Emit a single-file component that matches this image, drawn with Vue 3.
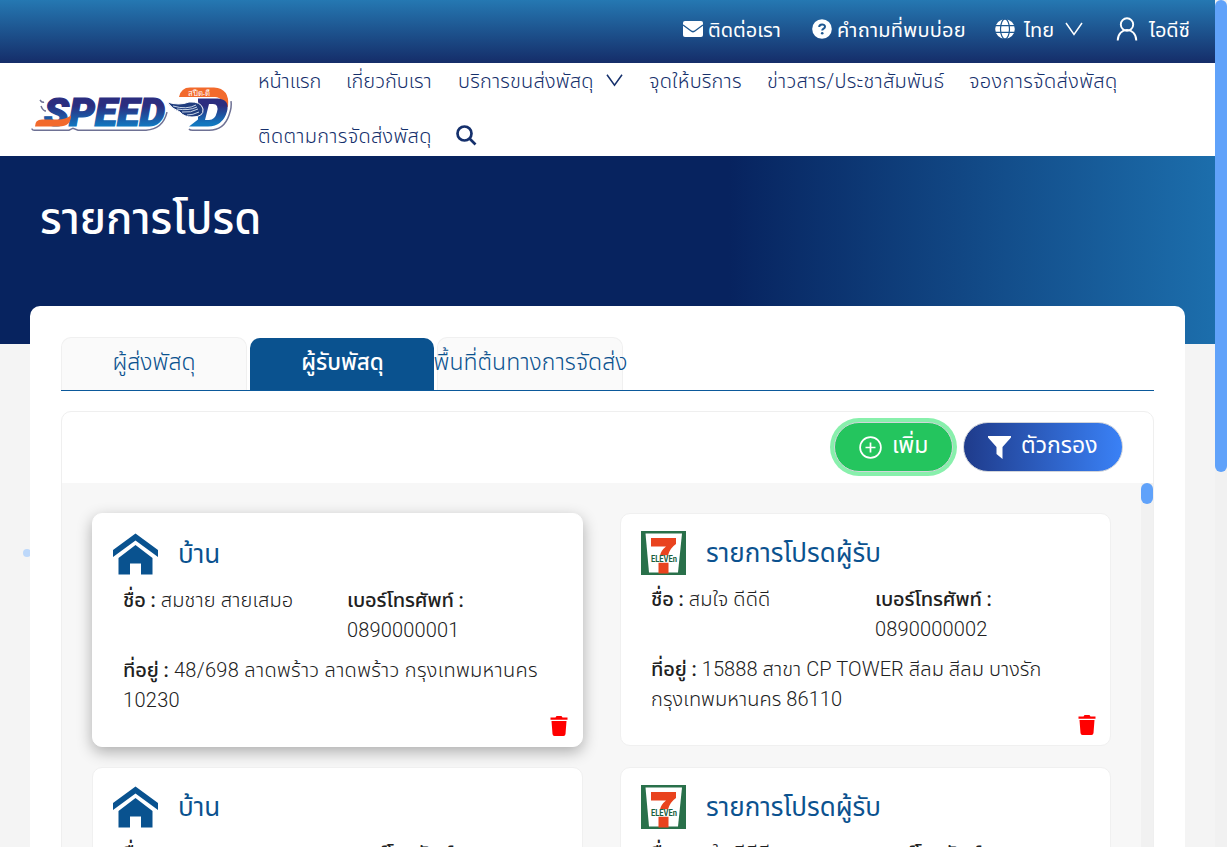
<script setup>
const nav = [
  { t: 'หน้าแรก', w: 62, sp: -0.1 },
  { t: 'เกี่ยวกับเรา', w: 86, sp: 0 },
  { t: 'บริการขนส่งพัสดุ', w: 137, sp: 0.2, arrow: true },
  { t: 'จุดให้บริการ', w: 92, sp: 0.2 },
  { t: 'ข่าวสาร/ประชาสัมพันธ์', w: 176, sp: 0.25 },
  { t: 'จองการจัดส่งพัสดุ', w: 149, sp: 0.35 },
  { t: 'ติดตามการจัดส่งพัสดุ', w: 173, sp: 0.3 },
]
const home = { home: true, title: 'บ้าน', name: 'สมชาย สายเสมอ', tel: '0890000001', a1: '48/698 ลาดพร้าว ลาดพร้าว กรุงเทพมหานคร', a2: '10230', sp: 0.3 }
const store = { home: false, title: 'รายการโปรดผู้รับ', name: 'สมใจ ดีดีดี', tel: '0890000002', a1: '15888 สาขา CP TOWER สีลม สีลม บางรัก', a2: 'กรุงเทพมหานคร 86110', sp: 0.08 }
const cards = [{ ...home, active: true }, store, home, store]
</script>

<template>
  <div class="page">
    <main class="content">
      <header class="top">
        <div class="item mail">
          <svg width="20" height="16" viewBox="0 0 20 16"><rect width="20" height="16" rx="2" fill="#fff"/><path d="M0 4l8.500 6.200q1.500 1 3 0L20 4" fill="none" stroke="#1d5790" stroke-width="1.400"/></svg>
          <span>ติดต่อเรา</span>
        </div>
        <div class="item faq">
          <svg width="20" height="20" viewBox="0 0 20 20"><circle cx="10" cy="10" r="9.800" fill="#fff"/><path d="M7.200 8c0-3.400 5.800-3.400 5.800-.3 0 2-2.800 1.800-2.800 3.900" fill="none" stroke="#1d5790" stroke-width="2"/><circle cx="10.200" cy="14.200" r="1.300" fill="#1d5790"/></svg>
          <span>คำถามที่พบบ่อย</span>
        </div>
        <div class="item lang">
          <svg width="20" height="20" viewBox="0 0 20 20"><circle cx="10" cy="10" r="9.800" fill="#fff"/><g fill="none" stroke="#1d5790" stroke-width="1.200"><ellipse cx="10" cy="10" rx="4.500" ry="10"/><path d="M0 6.700h20M0 13.300h20"/></g></svg>
          <span>ไทย</span>
          <svg class="chev" width="18" height="14" viewBox="0 0 18 14"><path d="M1 1l8 11.500L17 1" fill="none" stroke="#fff" stroke-width="1.500"/></svg>
        </div>
        <div class="item user">
          <svg width="22" height="24" viewBox="0 0 22 24"><g fill="none" stroke="#fff" stroke-width="1.900"><circle cx="11" cy="7.500" r="6.200"/><path d="M1.700 23.500C2 9.500 20 9.500 20.300 23.500"/></g></svg>
          <span>ไอดีซี</span>
        </div>
      </header>
      <div class="navbar">
        <svg class="logo" width="206" height="50" viewBox="0 0 206 50">
          <defs>
            <linearGradient id="lg" x1="0" y1="0" x2="0" y2="1"><stop offset=".25" stop-color="#2b2d7f"/><stop offset=".9" stop-color="#1277bf"/></linearGradient>
            <linearGradient id="word" gradientUnits="userSpaceOnUse" x1="0" y1="14" x2="0" y2="41"><stop offset=".25" stop-color="#2b2d7f"/><stop offset="1" stop-color="#1277bf"/></linearGradient>
          </defs>
          <path d="M2 43.500q0 2 3 1.700h34l4-2 5 2H116q17-1 21-18M10 15q2 3 4 2M11 21q2 5 5 5" fill="none" stroke="#6e7194" stroke-width="1.500"/>
          <text x="14" y="41" textLength="121" lengthAdjust="spacingAndGlyphs" class="word">SPEED</text>
          <path d="M5 41.500q0-7 7-7h17q6 0 12-4 0 11-12 11z" fill="#f26a2c"/>
          <path d="M149 12q2-9.500 11-9.500h24q16 1 14 19l-4 4q0-13-9-13.500z" fill="#f26a2c"/>
          <path d="M168 13.500h20q12 1 9 13-4 14.500-19 15h-19l9-7zM179 19l-4 16h4q6 0 8-8 2-8-4-8z" fill="url(#lg)" fill-rule="evenodd"/>
          <path d="M137 17q5 7 13 10 4 5 12 5 12 0 11-8-2-8-14-7-10 4-22 0z" fill="#203d7e" stroke="#fff"/>
          <path d="M143 21q14 4 23-1M147 24q12 2 20-2M152 27q9 1 16-3M157 30q6 0 12-3" fill="none" stroke="#d9e5f3" stroke-width=".9"/>
          <path d="M159 44q1 1.500 5 1.200h15q15 0 20-15 3-8 2-14" fill="none" stroke="#6e7194" stroke-width="1.500"/>
          <text x="158" y="10.500" textLength="22" lengthAdjust="spacingAndGlyphs" class="tag">สปีด-ดี</text>
        </svg>
        <nav class="links">
          <a v-for="n in nav" :key="n.t"><span :style="{ width: n.w + 'px', letterSpacing: n.sp + 'px' }">{{ n.t }}</span><svg v-if="n.arrow" width="17" height="13" viewBox="0 0 17 13"><path d="M1 .8l7.500 10.500L16 .8" fill="none" stroke="#15306c" stroke-width="1.500"/></svg></a>
          <svg class="search" width="21" height="21" viewBox="0 0 21 21"><g fill="none" stroke="#15306c" stroke-width="2.700"><circle cx="8.500" cy="8.500" r="7"/><path d="M13.500 13.500l6 6"/></g></svg>
        </nav>
      </div>
      <div class="hero"><h1>รายการโปรด</h1></div>
      <section class="panel">
        <div class="tabs">
          <div class="tab">ผู้ส่งพัสดุ</div>
          <div class="tab on">ผู้รับพัสดุ</div>
          <div class="tab last"><span>พื้นที่ต้นทางการจัดส่ง</span></div>
        </div>
        <div class="box">
          <div class="tools">
            <button class="btn add">
              <svg width="23" height="23" viewBox="0 0 23 23"><g fill="none" stroke="#fff" stroke-width="1.700"><circle cx="11.500" cy="11.500" r="10.400"/><path d="M11.500 6.500v10M6.500 11.500h10"/></g></svg>
              <span>เพิ่ม</span>
            </button>
            <button class="btn filter">
              <svg width="23" height="23" viewBox="0 0 23 23"><path d="M0 0h23v1.500L14.500 11v12L8.500 18v-7L0 1.500z" fill="#fff"/></svg>
              <span>ตัวกรอง</span>
            </button>
          </div>
          <div class="scroll">
            <div class="grid">
              <article v-for="(c, i) in cards" :key="i" class="card" :class="{ active: c.active }">
                <div class="head">
                  <svg v-if="c.home" width="45" height="44" viewBox="0 0 45 44"><path d="M22.500 1.500L45 18v7L22.500 8.500 0 25v-7zM22.500 13L39.500 26v16.500H28V31.500H17v11H5.500V26z" fill="#09528f"/></svg>
                  <svg v-else width="45" height="44" viewBox="0 0 45 44"><path d="M0 0h45v44H0z" fill="#29704a"/><path d="M4.500 2.500h36.500L37 41.500H8z" fill="#fff"/><path d="M10 7h25v6q-6 4-8 11.500h-8q1-5 6-9H10zM17.500 31.500h10v11h-10z" fill="#e9431e"/><path d="M9 24.500h28v7H9z" fill="#fff"/><text x="10" y="30.700" textLength="26" lengthAdjust="spacingAndGlyphs" class="eleven">ELEVEn</text></svg>
                  <h2>{{ c.title }}</h2>
                </div>
                <div class="row">
                  <p class="name"><b>ชื่อ :</b> {{ c.name }}</p>
                  <p class="tel"><b>เบอร์โทรศัพท์ :</b><br>{{ c.tel }}</p>
                </div>
                <p class="addr" :style="{ letterSpacing: c.sp + 'px' }"><b>ที่อยู่ :</b> {{ c.a1 }}<br>{{ c.a2 }}</p>
                <svg class="trash" width="18" height="20" viewBox="0 0 18 20"><path d="M.5 1.500H5.500L6.500 0h5l1 1.500h5v2.300H.5zM1.500 5h15L15.500 18q-.2 2-2 2h-9q-1.800 0-2-2z" fill="#f00"/></svg>
              </article>
            </div>
            <div class="track"><i></i></div>
          </div>
        </div>
      </section>
      <i class="dot"></i>
    </main>
    <div class="pagebar"><i></i></div>
  </div>
</template>

<style>
body { overflow: hidden; }
</style>
<style scoped>
* { box-sizing: border-box; }
.page { display: flex; width: 1227px; height: 847px; overflow: hidden; background: #f4f4f4; font-family: Roboto, "Noto Sans Thai", sans-serif; font-weight: 300; white-space: nowrap; }
.content { position: relative; width: 1215px; display: flex; flex-direction: column; }
.pagebar { width: 12px; background: #f1f1f1; }
.pagebar i { display: block; height: 472px; border-radius: 6px; background: #60a2fa; }
.top { height: 63px; flex: none; background: linear-gradient(#2578b2, #152d69); display: flex; justify-content: flex-end; padding: 0 24px 5px 0; color: #fff; font-size: 20px; font-weight: 400; }
.item { display: flex; align-items: center; }
.item span { padding-top: 3px; }
.mail { width: 129px; gap: 5px; }
.faq { width: 183px; gap: 5px; letter-spacing: .25px; }
.lang { width: 121px; gap: 9px; }
.lang .chev { margin-left: 2px; }
.user { width: 75px; gap: 11px; }
.navbar { height: 93px; flex: none; background: #fff; display: flex; padding-left: 30px; }
.logo { flex: none; margin-top: 22px; margin-right: 22px; overflow: visible; }
.word { font: italic 900 38px Roboto, sans-serif; fill: url(#word); stroke: url(#word); stroke-width: 1.2px; }
.tag { font: 8px sans-serif; fill: #fff; }
.links { display: flex; flex-wrap: wrap; align-content: flex-start; column-gap: 26px; color: #15306c; font-size: 20px; width: 900px; margin-top: -9px; }
.links a { height: 55px; display: flex; align-items: center; gap: 11px; }
.links a span { display: block; }
.links a svg { margin-top: -2px; }
.search { margin: 16px 0 0 -1px; }
.hero { height: 188px; flex: none; background: linear-gradient(90deg, #07235f 60%, #1c6eac); padding: 33px 40px; }
h1 { margin: 0; font-size: 43.600px; line-height: 62px; font-weight: 500; color: #fff; }
.panel { position: relative; margin: -38px 30px 0; height: 560px; background: #fff; border-radius: 10px 10px 0 0; padding: 31px 31px 0; }
.tabs { display: flex; gap: 3px; height: 54px; border-bottom: 1px solid #0b599b; }
.tab { width: 186px; border: 1px solid #f0f0f0; border-bottom: 0; border-radius: 10px 10px 0 0; background: #fafafa; color: #0b528f; font-size: 23px; display: flex; align-items: center; justify-content: center; padding-bottom: 2px; }
.tab.on { background: #0a528f; color: #fff; font-size: 22.500px; font-weight: 500; width: 184px; border: 0; margin-top: 1px; padding-left: 1px; }
.last span { margin-left: 1px; letter-spacing: .05px; }
.box { margin-top: 20px; height: 500px; border: 1px solid #efefef; border-radius: 10px; }
.tools { height: 71px; display: flex; justify-content: flex-end; gap: 10px; padding: 10px 30px 0 0; }
.btn { height: 50px; border-radius: 25px; border: 1px solid #d2d5da; color: #fff; font-family: inherit; font-weight: 400; font-size: 23px; display: flex; align-items: center; padding: 0; }
.btn span { padding-bottom: 3px; }
.add { width: 119px; margin-right: 1px; background: #24c55e; box-shadow: 0 0 0 4px #88f0ac; padding-left: 24px; gap: 10px; }
.filter { width: 160px; margin-left: -1px; background: linear-gradient(90deg, #1f3b8b, #3a81f6); padding-left: 24px; gap: 10px; }
.scroll { display: flex; height: 430px; background: #f7f7f7; }
.grid { display: grid; grid-template-columns: 491px 491px; grid-auto-rows: 233px; gap: 21px 37px; padding: 30px 0 0 30px; width: 1079px; }
.track { width: 12px; background: #f1f1f1; }
.track i { display: block; height: 21px; border-radius: 6px; background: #60a2fa; }
.card { background: #fff; border: 1px solid #f0f0f0; border-radius: 10px; padding: 16px 19px; color: #212121; font-size: 20px; line-height: 30px; position: relative; }
.card.active { margin: 0 0 -1px; border-color: #fff; box-shadow: 0 5px 15px rgba(0,0,0,.3); padding: 17px 19px; }
.head { display: flex; height: 45px; align-items: center; gap: 20px; }
.head svg { margin-left: 1px; }
h2 { margin: 0; font-size: 26px; font-weight: 400; color: #0b528f; }
p { margin: 0; }
b { font-weight: 500; letter-spacing: -.1px; }
.row { display: flex; margin: 9px 0 10px 11px; }
.name { width: 224px; letter-spacing: .15px; }
.tel { letter-spacing: .15px; }
.addr { margin-left: 11px; }
.trash { position: absolute; right: 14px; bottom: 10px; }
.eleven { font: bold 8.500px Roboto, sans-serif; fill: #1b603f; }
.dot { position: absolute; left: 23px; top: 549px; width: 8px; height: 8px; border-radius: 50%; background: #bdd8fa; clip-path: inset(0 1px 0 0); }
</style>
